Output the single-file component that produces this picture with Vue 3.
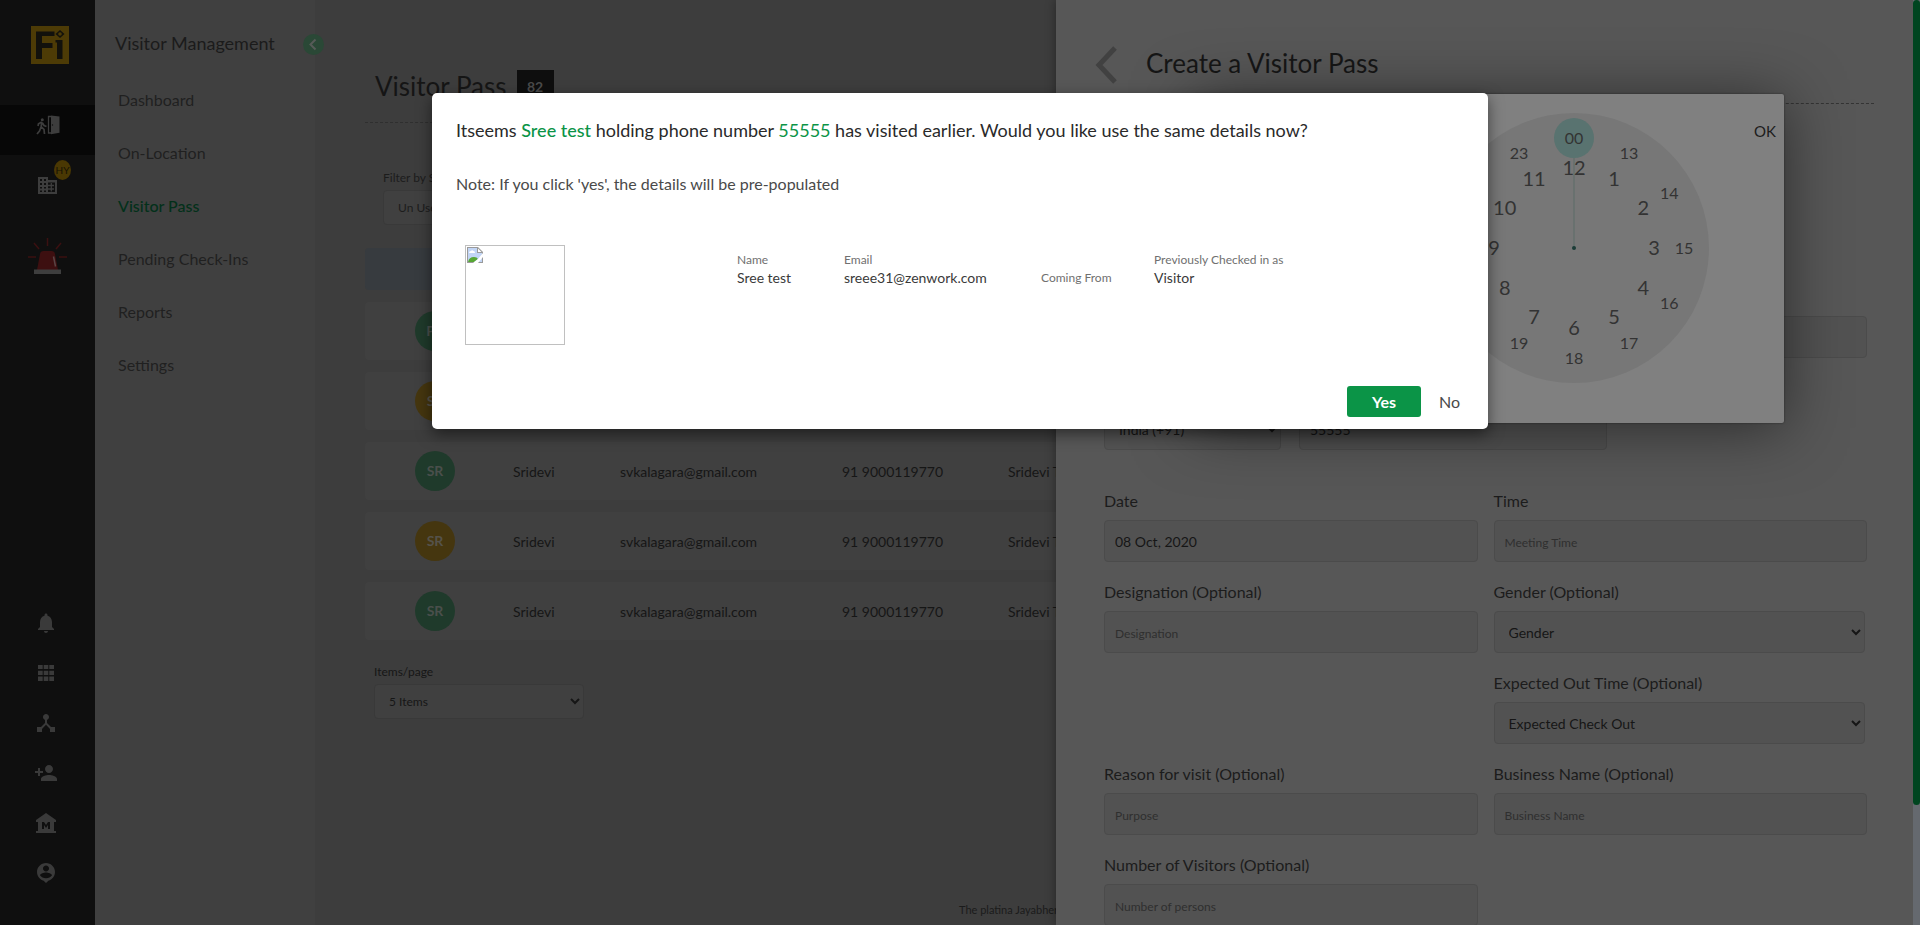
<script setup>
const nav = ['Dashboard', 'On-Location', 'Visitor Pass', 'Pending Check-Ins', 'Reports', 'Settings']
const rows = [
  { initials: 'PR', tone: 'green', name: 'Praveen', email: 'praveen@gmail.com' },
  { initials: 'SR', tone: 'gold', name: 'Sridevi', email: 'svkalagara@gmail.com' },
  { initials: 'SR', tone: 'green', name: 'Sridevi', email: 'svkalagara@gmail.com' },
  { initials: 'SR', tone: 'gold', name: 'Sridevi', email: 'svkalagara@gmail.com' },
  { initials: 'SR', tone: 'green', name: 'Sridevi', email: 'svkalagara@gmail.com' },
]
const tools = [
  { label: 'Notifications', d: 'M12 22c1.1 0 2-.9 2-2h-4c0 1.1.9 2 2 2zm6-6v-5c0-3.07-1.63-5.64-4.5-6.32V4c0-.83-.67-1.5-1.5-1.5s-1.5.67-1.5 1.5v.68C7.64 5.36 6 7.92 6 11v5l-2 2v1h16v-1l-2-2z' },
  { label: 'Apps', d: 'M4 8h4.700V4H4v4zm5.700 0h4.600V4H9.700v4zM4 14h4.700v-4.300H4V14zm0 6h4.700v-4.600H4V20zm5.700 0h4.600v-4.600H9.700V20zm0-6h4.600V9.700H9.700V14zM15.300 4v4H20V4h-4.700zm0 10H20V9.700h-4.700V14zm0 6H20v-4.600h-4.700V20z' },
  { label: 'Integrations', d: 'M17 16l-4-4V8.820C14.160 8.400 15 7.300 15 6c0-1.660-1.340-3-3-3S9 4.340 9 6c0 1.300.84 2.400 2 2.820V12l-4 4H3v5h5v-3.050l4-4.200 4 4.200V21h5v-5h-4z' },
  { label: 'Add person', d: 'M15 12c2.210 0 4-1.790 4-4s-1.790-4-4-4-4 1.790-4 4 1.790 4 4 4zm-9-2V7H4v3H1v2h3v3h2v-3h3v-2H6zm9 4c-2.670 0-8 1.340-8 4v2h16v-2c0-2.660-5.330-4-8-4z' },
  { label: 'Building', d: 'M22 11V9L12 2 2 9v2h2v9H2v2h20v-2h-2v-9h2zm-6 7h-2v-4l-2 3-2-3v4H8v-7h2l2 3 2-3h2v7z' },
  { label: 'Account', d: 'M12 2C7.030 2 3 6 3 11c0 4.170 2.800 7.680 6.640 8.700L12 22l2.360-2.300C18.200 18.680 21 15.170 21 11c0-5-4.030-9-9-9zm0 2.500c1.660 0 3 1.340 3 3s-1.340 3-3 3-3-1.340-3-3 1.340-3 3-3zm0 12.700c-2.500 0-4.710-1.100-6-2.900.03-1.900 4-2.900 6-2.900s5.970 1 6 2.900c-1.290 1.800-3.500 2.900-6 2.900z' },
]
const place = (i, r) => ({
  x: 135 + r * Math.sin((i * Math.PI) / 6),
  y: 135 - r * Math.cos((i * Math.PI) / 6),
})
const outer = Array.from({ length: 12 }, (_, i) => ({ label: i ? String(i + 12) : '00', ...place(i, 110) }))
const inner = Array.from({ length: 12 }, (_, i) => ({ label: String(i || 12), ...place(i, 80) }))
</script>

<template>
  <div class="page">
    <aside class="rail">
      <a href="#" class="logo" aria-label="Home">
        <svg width="38" height="38" viewBox="0 0 38 38">
          <rect width="38" height="38" fill="#4d3b06" />
          <path d="M5 5.500h18.500V10H11v7h10.500v5H11v11H5z M24.500 14H31.500v19H26V16.500h-1.500z M29 4l4.500 4-4.500 4-4.500-4z" fill="#12110c" />
          <circle cx="29" cy="8" r="1.800" fill="#4d3b06" />
        </svg>
      </a>
      <a href="#" class="rail-link active" aria-label="Visitors">
        <svg width="24" height="20" viewBox="0 0 24 20">
          <circle cx="6.300" cy="4.800" r="1.500" fill="#3d3d3d" />
          <path d="M5.800 7L2.500 8.800 2 11M6 7l-1 5-1.500 4L1 19M5.500 12l2.500 2.500.5 4.500M6.500 8l1.500 2.500 2.500 1" fill="none" stroke="#3d3d3d" stroke-width="1.700" />
          <path d="M15 1.500h-2.500V18H15" fill="none" stroke="#3d3d3d" stroke-width="1.300" />
          <path d="M15 .5l8.500 1v16.300L15 19.300z" fill="#3d3d3d" />
          <circle cx="16.500" cy="10" r=".7" fill="#111" />
        </svg>
      </a>
      <a href="#" class="rail-link building" aria-label="Offices">
        <svg width="19" height="17" viewBox="0 0 19 17">
          <path d="M0 0h10v3h9v14H0z" fill="#3d3d3d" />
          <path d="M2 2h2v2H2zM6 2h2v2H6zM2 6h2v2H2zM6 6h2v2H6zM2 10h2v1.500H2zM6 10h2v1.500H6zM2 13.500h2V15H2zM6 13.500h2V15H6zM10 5.500h7V15h-7z" fill="#0f0f0f" />
          <path d="M10 8.500h6M10 12h6M13.300 6v8.500" stroke="#3d3d3d" stroke-width="1.300" />
        </svg>
        <span class="tag">HY</span>
      </a>
      <button class="alarm" aria-label="Emergency">
        <svg width="39" height="37" viewBox="0 0 39 37">
          <path d="M0 19h8M31 19h8M6 5l5 6M33 5l-5 6M19.500 0v8" stroke="#3b1011" stroke-width="1.500" />
          <path d="M9 32l3-16q.5-3 3.500-3h8q3 0 3.500 3l3 16z" fill="#3d0f10" />
          <path d="M25.500 18.500l2 10" stroke="#5a4444" stroke-width="1.500" />
          <path d="M6 31.500h27V36H6z" fill="#3e3e3e" />
        </svg>
      </button>
      <nav class="tools" aria-label="Tools">
        <a v-for="t in tools" :key="t.label" href="#" :aria-label="t.label">
          <svg width="24" height="24" viewBox="0 0 24 24"><path :d="t.d" fill="#3a3a3a" fill-rule="evenodd" /></svg>
        </a>
      </nav>
    </aside>

    <section class="side">
      <h2>Visitor Management</h2>
      <button class="collapse" aria-label="Collapse menu">
        <svg width="21" height="21" viewBox="0 0 21 21"><path d="M12.500 5.500l-5 5 5 5" fill="none" stroke="#565b58" stroke-width="2" /></svg>
      </button>
      <nav aria-label="Visitor management">
        <a v-for="n in nav" :key="n" href="#" :class="{ current: n === 'Visitor Pass' }">{{ n }}</a>
      </nav>
    </section>

    <main class="main">
      <header class="main-head">
        <h1>Visitor Pass</h1><span class="count">82</span>
      </header>
      <div class="filter">
        <label for="status">Filter by Status</label>
        <select id="status"><option>Un Used</option></select>
      </div>
      <div class="list-head"></div>
      <table class="list">
        <tbody>
          <tr v-for="(r, i) in rows" :key="i">
            <td class="c-avatar"><span class="avatar" :class="r.tone">{{ r.initials }}</span></td>
            <td class="c-name">{{ r.name }}</td>
            <td class="c-email">{{ r.email }}</td>
            <td class="c-phone">91 9000119770</td>
            <td>Sridevi Test</td>
          </tr>
        </tbody>
      </table>
      <div class="pager">
        <label for="items">Items/page</label>
        <select id="items"><option>5 Items</option></select>
      </div>
      <footer>The platina Jayabheri</footer>
    </main>

    <section class="drawer" aria-label="Create a Visitor Pass">
      <header class="drawer-head">
        <button aria-label="Back">
          <svg width="24" height="38" viewBox="0 0 24 38"><path d="M21 2L5 19l16 17" fill="none" stroke="#414141" stroke-width="5" /></svg>
        </button>
        <h2>Create a Visitor Pass</h2>
      </header>
      <form class="form" @submit.prevent>
        <div class="spacer"></div>
        <div class="field"><input type="text" aria-label="Email"></div>
        <div class="phone">
          <select aria-label="Country code"><option>India (+91)</option></select>
          <input type="text" value="55555" aria-label="Phone number">
        </div>
        <div class="field first"><label for="date">Date</label><input id="date" type="text" value="08 Oct, 2020"></div>
        <div class="field first"><label for="time">Time</label><input id="time" type="text" placeholder="Meeting Time"></div>
        <div class="field"><label for="desig">Designation (Optional)</label><input id="desig" type="text" placeholder="Designation"></div>
        <div class="field"><label for="gender">Gender (Optional)</label><select id="gender"><option>Gender</option></select></div>
        <div class="field right"><label for="out">Expected Out Time (Optional)</label><select id="out"><option>Expected Check Out</option></select></div>
        <div class="field"><label for="reason">Reason for visit (Optional)</label><input id="reason" type="text" placeholder="Purpose"></div>
        <div class="field"><label for="biz">Business Name (Optional)</label><input id="biz" type="text" placeholder="Business Name"></div>
        <div class="field"><label for="num">Number of Visitors (Optional)</label><input id="num" type="text" placeholder="Number of persons"></div>
      </form>
      <div class="track"><div class="thumb"></div></div>
      <div class="picker">
        <svg class="clock" width="270" height="270" viewBox="0 0 270 270">
          <circle cx="135" cy="135" r="135" fill="#777" />
          <circle cx="135" cy="25" r="20" fill="#597370" />
          <path d="M135 45v90" stroke="#69716f" stroke-width="2" />
          <circle cx="135" cy="135" r="2" fill="#1b3c37" />
          <text v-for="n in outer" :key="n.label" :x="n.x" :y="n.y + 6" class="o">{{ n.label }}</text>
          <text v-for="n in inner" :key="n.label" :x="n.x" :y="n.y + 7" class="i">{{ n.label }}</text>
        </svg>
        <button class="ok">OK</button>
      </div>
    </section>

    <div class="modal" role="dialog" aria-labelledby="ask">
      <h3 id="ask">Itseems <b>Sree test</b> holding phone number <em>55555</em> has visited earlier. Would you like use the same details now?</h3>
      <p class="note">Note: If you click 'yes', the details will be pre-populated</p>
      <div class="details">
        <div class="photo" role="img" aria-label="Visitor photo">
          <svg width="16" height="16" viewBox="0 0 16 16">
            <path d="M0 0h11l5 5v11H0z" fill="#9a9a9a" />
            <path d="M1 1h9v5h5v9H1z" fill="#c2d5f5" />
            <path d="M11 1.500L14.500 5H11z" fill="#fff" />
            <path d="M2 6q0-2 2-2 1-1.500 2.500 0Q8 4.200 8 6z" fill="#fff" />
            <path d="M1 15q1-5 6-5 3 0 4 2l-4 3z" fill="#57a733" />
            <path d="M16 6v4l-5 6H6l5-4z" fill="#fff" />
          </svg>
        </div>
        <dl>
          <div><dt>Name</dt><dd>Sree test</dd></div>
          <div><dt>Email</dt><dd>sreee31@zenwork.com</dd></div>
          <div><dt>Coming From</dt></div>
          <div><dt>Previously Checked in as</dt><dd>Visitor</dd></div>
        </dl>
      </div>
      <div class="actions">
        <button class="yes">Yes</button>
        <button class="no">No</button>
      </div>
    </div>
  </div>
</template>

<style>
body { background: #3e3e3e; }
</style>

<style scoped>
.page, .page * { box-sizing: border-box; }
.page {
  position: relative;
  display: flex;
  height: 100vh;
  overflow: hidden;
  background: #3d3d3d;
  color: #161616;
  font-family: Lato, "Liberation Sans", sans-serif;
  font-size: 14px;
}
h1, h2, h3, p, dl, dd { margin: 0; font-weight: 400; }
a { color: inherit; text-decoration: none; }
button { border: 0; padding: 0; background: none; font: inherit; color: inherit; }
input, select { font-family: inherit; color: inherit; margin: 0; outline: 0; }

.rail { display: flex; flex-direction: column; flex: 0 0 95px; background: #0f0f0f; }
.logo { height: 38px; margin: 26px 0 41px 31px; }
.logo svg, .tools svg, .alarm svg { display: block; }
.rail-link { position: relative; display: flex; align-items: center; justify-content: center; height: 50px; }
.rail-link.active { background: #070707; padding-bottom: 10px; }
.rail-link.building { height: 60px; }
.tag {
  position: absolute; left: 54px; top: 5px; width: 17px; height: 20px; border-radius: 50%;
  background: #4a3803; color: #151204; font-size: 10px; line-height: 21px; text-align: center;
}
.alarm { margin: 23px 0 0 28px; align-self: flex-start; }
.tools { display: flex; flex-direction: column; gap: 26px; margin: auto 0 40px 34px; }

.side { position: relative; flex: 0 0 220px; background: #404040; padding: 30px 0 0 20px; }
.side h2 { font-size: 18px; line-height: 26px; color: #1b1b1b; }
.collapse { position: absolute; right: -9px; top: 34px; width: 21px; height: 21px; border-radius: 50%; background: #28483a; background: #2a4836; z-index: 1; }
.collapse svg { display: block; }
.side nav { display: flex; flex-direction: column; padding: 17px 0 0 3px; }
.side nav a { font-size: 16px; line-height: 53px; color: #202020; }
.side nav a.current { color: #03301a; font-weight: 500; }

.main { flex: 1; display: flex; flex-direction: column; min-width: 0; padding: 68px 0 0 50px; }
.main-head { display: flex; align-items: flex-start; height: 55px; padding-left: 10px; border-bottom: 1px dashed #2f2f2f; }
.main-head h1 { font-size: 26px; line-height: 36px; color: #151515; }
.count { margin: 2px 0 0 10px; width: 37px; height: 32px; background: #0e0e0e; color: #4a4a4a; font-weight: 700; line-height: 34px; text-align: center; }
.filter { display: flex; flex-direction: column; width: 230px; margin: 46px 0 0 18px; font-size: 12px; line-height: 18px; color: #1c1c1c; }
.filter select, .pager select { height: 35px; border: 1px solid #393939; border-radius: 4px; background: #404040; padding: 0 10px; font-size: 12px; }
.filter select { margin-top: 3px; }
.list-head { height: 42px; margin-top: 23px; border-radius: 4px; background: #373b3f; }
.list { border-collapse: separate; border-spacing: 0 12px; width: 100%; table-layout: fixed; }
.list td { height: 58px; padding: 0; background: #404040; white-space: nowrap; }
.list td:first-child { border-radius: 4px 0 0 4px; }
.c-avatar { width: 148px; }
.c-name { width: 107px; }
.c-email { width: 222px; }
.c-phone { width: 166px; }
.avatar { display: block; width: 40px; height: 40px; margin-left: 50px; border-radius: 50%; color: #4a4f4c; font-weight: 700; line-height: 40px; text-align: center; }
.avatar.green { background: #1f3a2b; }
.avatar.gold { background: #45360f; color: #55524a; }
.pager { display: flex; flex-direction: column; width: 210px; margin: 11px 0 0 9px; font-size: 12px; line-height: 18px; }
.pager select { margin-top: 3px; }
.main footer { margin: auto 0 6px 594px; font-size: 11px; line-height: 18px; color: #1b1b1b; white-space: nowrap; }

.drawer { position: absolute; z-index: 2; top: 0; right: 0; bottom: 0; width: 45%; background: #575757; box-shadow: 0 0 10px rgba(0, 0, 0, .4); overflow: hidden; color: #161616; }
.drawer-head { display: flex; align-items: center; gap: 28px; height: 66px; margin: 38px 46px 0 38px; padding-bottom: 16px; border-bottom: 1px dashed #343434; }
.drawer-head button { display: flex; padding-top: 4px; }
.drawer-head h2 { font-size: 26px; line-height: 36px; }
.form { display: grid; grid-template-columns: 1fr 1fr; gap: 21px 16px; padding: 212px 53px 0 48px; }
.field { display: flex; flex-direction: column; gap: 11px; }
.spacer + .field { display: block; }
.field label { font-size: 16px; line-height: 17px; color: #1c1c1c; }
.field input, .field select, .phone input, .phone select { width: 100%; height: 42px; border: 1px solid #4b4b4b; border-radius: 4px; background: #525252; padding: 0 10px; font-size: 14px; }
.field select { width: calc(100% - 2px); }
.field input::placeholder { font-size: 12px; color: #2f2f2f; opacity: 1; }
.phone { grid-column: 1 / -1; display: flex; gap: 18px; margin-top: 29px; }
.phone select { width: 177px; }
.phone input { width: 308px; }
.first { margin-top: 21px; }
.right { grid-column: 2; }
.track { position: absolute; top: 0; right: 0; bottom: 0; width: 7px; background: #65696f; }
.thumb { height: 87%; border-radius: 4px; background: #004520; }

.picker { position: absolute; top: 94px; right: 136px; width: 590px; height: 329px; border-radius: 2px; background: #808080; box-shadow: 0 5px 60px rgba(0, 0, 0, .5), 0 0 2px rgba(0, 0, 0, .5); }
.clock { position: absolute; right: 75px; top: 19px; }
.clock text { text-anchor: middle; fill: #333; }
.clock .o { font-size: 16px; }
.clock .i { font-size: 20px; }
.ok { position: absolute; right: 8px; top: 27px; font-size: 15px; line-height: 20px; color: #1c1c1c; }

.modal { position: absolute; z-index: 3; top: 93px; left: 22.5%; width: 55%; padding: 23px 24px 12px; border-radius: 5px; background: #fff; box-shadow: 0 5px 15px rgba(0, 0, 0, .5); color: #333; }
.modal h3 { font-size: 18px; line-height: 28px; color: #2a2a2a; }
.modal h3 b { font-weight: 500; color: #0b9447; }
.modal h3 em { font-style: normal; color: #0b9447; }
.note { margin-top: 29px; font-size: 16px; line-height: 22px; color: #4a4a4a; }
.details { display: flex; margin: 50px 0 0 9px; }
.photo { width: 100px; height: 100px; flex: none; border: 1px solid #c0c0c0; padding: 1px; }
.photo svg { display: block; }
dl { display: grid; grid-template-columns: 107px 197px 113px auto; align-items: end; align-self: flex-start; margin: 6px 0 0 172px; }
dt { font-size: 12px; line-height: 18px; color: #707070; }
dd { font-size: 14px; line-height: 18px; color: #3a3a3a; }
.actions { display: flex; justify-content: flex-end; gap: 18px; margin: 41px 4px 0 0; font-size: 16px; color: #4a4a4a; }
.yes { width: 74px; height: 31px; border-radius: 3px; background: #0b9447; color: #fff; font-weight: 700; }
</style>
